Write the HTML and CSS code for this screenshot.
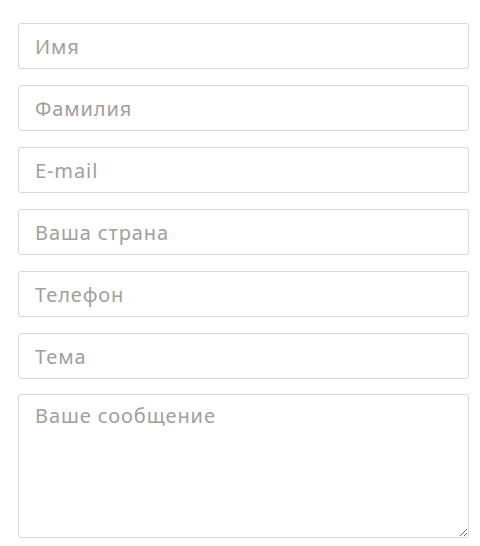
FILE: index.html
```html
<!DOCTYPE html>
<html lang="ru">
<head>
<meta charset="utf-8">
<title>Форма</title>
<link rel="stylesheet" href="styles.css">
</head>
<body>
<form class="form">
  <input class="field" type="text" placeholder="Имя">
  <input class="field" type="text" placeholder="Фамилия">
  <input class="field" type="email" placeholder="E-mail">
  <input class="field" type="text" placeholder="Ваша страна">
  <input class="field" type="tel" placeholder="Телефон">
  <input class="field" type="text" placeholder="Тема">
  <textarea class="field area" placeholder="Ваше сообщение"></textarea>
</form>
</body>
</html>
```

FILE: styles.css
```css
html, body {
  margin: 0;
  padding: 0;
  background: #fff;
}
.form {
  display: flex;
  flex-direction: column;
  gap: 16px;
  width: 451px;
  margin: 0 0 0 18px;
  padding-top: 23px;
}
.field {
  box-sizing: border-box;
  width: 100%;
  height: 46px;
  margin: 0;
  padding: 0 16px;
  border: 1px solid #d9d9d9;
  border-radius: 3px;
  background: #fff;
  font-family: "Noto Sans", sans-serif;
  font-size: 20px;
  letter-spacing: 0.9px;
  color: #555;
  outline: none;
}
.field::placeholder {
  color: #a0a0a0;
  opacity: 1;
}
.area {
  height: 144px;
  margin-top: -1px;
  padding: 7px 16px;
  resize: vertical;
  display: block;
}
```
